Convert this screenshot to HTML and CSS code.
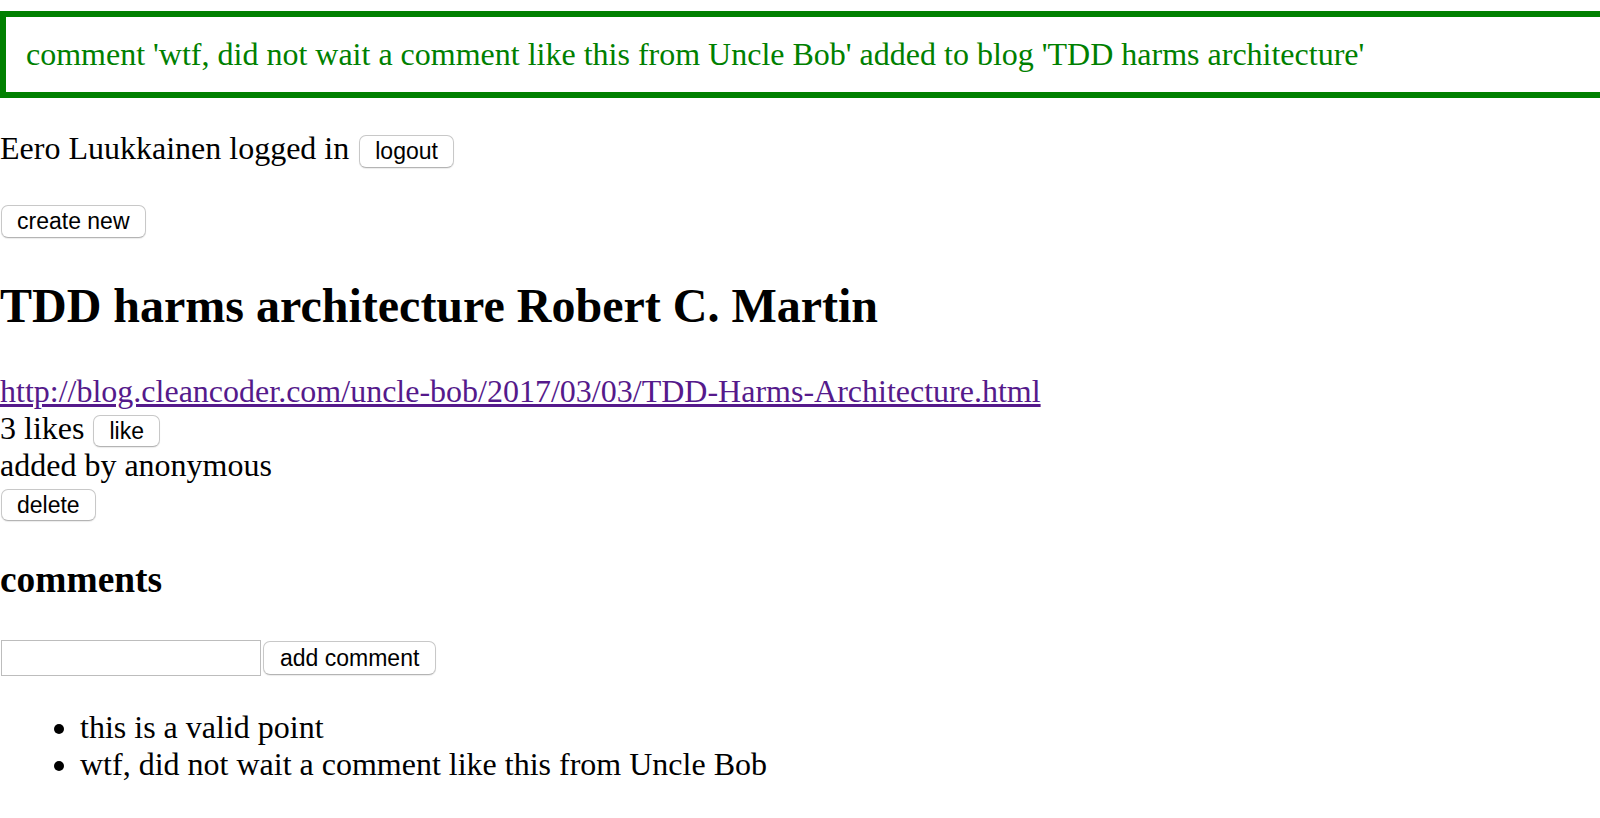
FILE: index.html
```html
<!DOCTYPE html>
<html>
<head>
<meta charset="utf-8">
<title>blogs</title>
<link rel="stylesheet" href="styles.css">
</head>
<body>
<div class="notification">comment 'wtf, did not wait a comment like this from Uncle Bob' added to blog 'TDD harms architecture'</div>
<p class="login">Eero Luukkainen logged in <button class="btn btn-logout">logout</button></p>
<div class="toggle"><button class="btn">create new</button></div>
<h2 class="title">TDD harms architecture Robert C. Martin</h2>
<div class="details">
  <div><a class="link" href="#">http://blog.cleancoder.com/uncle-bob/2017/03/03/TDD-Harms-Architecture.html</a></div>
  <div>3 likes <button class="btn btn-small">like</button></div>
  <div>added by anonymous</div>
  <div><button class="btn btn-small">delete</button></div>
</div>
<h3 class="comments-title">comments</h3>
<form class="comment-form">
  <input class="comment-input" type="text"><button class="btn" type="button">add comment</button>
</form>
<ul class="comment-list">
  <li>this is a valid point</li>
  <li>wtf, did not wait a comment like this from Uncle Bob</li>
</ul>
</body>
</html>
```

FILE: styles.css
```css
html, body {
  margin: 0;
  padding: 0;
  background: #fff;
  overflow-x: hidden;
}
body {
  font-family: "Liberation Serif", "Times New Roman", serif;
  font-size: 32px;
  color: #000;
  padding-top: 11px;
}
.notification {
  color: #008000;
  border: 6px solid #008000;
  padding: 19px 20px;
  margin-right: -40px;
  margin-bottom: 20px;
}
.login {
  margin: 32px 0;
}
.btn {
  font-family: "Liberation Sans", Arial, sans-serif;
  font-size: 23px;
  color: #000;
  background: #fff;
  border: 1px solid #c8c8c8;
  border-bottom-color: #b4b4b4;
  border-radius: 7px;
  padding: 0 15px;
  height: 33px;
  line-height: 31px;
  margin: 0 0 0 4px;
  box-shadow: 0 1px 1px rgba(0,0,0,0.08);
  vertical-align: baseline;
}
.btn-logout {
  margin-left: 2px;
}
.toggle .btn,
.details .btn-small:only-child {
  margin-left: 1px;
}
.btn-small {
  height: 32px;
}
.title {
  font-size: 48px;
  font-weight: bold;
  margin: 40px 0;
}
.link {
  color: #551a8b;
  text-decoration: underline;
}
.comments-title {
  font-size: 37.44px;
  font-weight: bold;
  margin: 37px 0 39px;
}
.comment-form {
  margin: 0;
  display: flex;
  align-items: center;
  gap: 2px;
}
.comment-input {
  width: 260px;
  height: 36px;
  box-sizing: border-box;
  border: 1px solid #bdbdbd;
  margin: 0 0 0 1px;
  padding: 0 4px;
  font-size: 26px;
}
.comment-form .btn {
  margin: 0;
  height: 34px;
  padding: 0 16px;
}
.comment-list {
  margin: 33px 0;
  padding-left: 80px;
}
```
